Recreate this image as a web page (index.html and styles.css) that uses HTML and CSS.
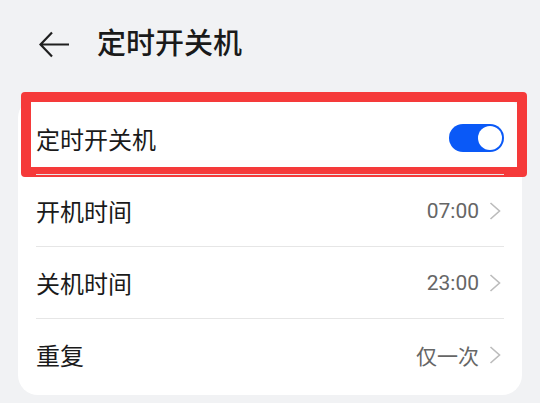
FILE: index.html
```html
<!DOCTYPE html>
<html lang="zh-CN">
<head>
    <meta charset="UTF-8">
    <meta name="viewport" content="width=device-width, initial-scale=1.0">
    <title>定时开关机</title>
    <link rel="stylesheet" href="styles.css">
</head>
<body>
    <header class="top-bar">
        <svg class="back-icon" width="30" height="27" viewBox="0 0 30 27">
            <path d="M30 13.5H2M13 1.5L1.5 13.5L13 25.5" fill="none" stroke="#1f1f1f" stroke-width="2.2"/>
        </svg>
        <h1 class="page-title">定时开关机</h1>
    </header>

    <div class="settings-card">
        <div class="setting-row highlighted">
            <span class="row-label">定时开关机</span>
            <div class="switch on"><div class="knob"></div></div>
            <div class="highlight-frame"></div>
        </div>
        <div class="setting-row">
            <span class="row-label">开机时间</span>
            <span class="row-value">07:00</span>
            <svg class="chevron" width="12" height="18" viewBox="0 0 12 18"><path d="M1.5 1L10.5 9L1.5 17" fill="none" stroke="#bcbcbc" stroke-width="1.6"/></svg>
        </div>
        <div class="setting-row">
            <span class="row-label">关机时间</span>
            <span class="row-value">23:00</span>
            <svg class="chevron" width="12" height="18" viewBox="0 0 12 18"><path d="M1.5 1L10.5 9L1.5 17" fill="none" stroke="#bcbcbc" stroke-width="1.6"/></svg>
        </div>
        <div class="setting-row">
            <span class="row-label">重复</span>
            <span class="row-value">仅一次</span>
            <svg class="chevron" width="12" height="18" viewBox="0 0 12 18"><path d="M1.5 1L10.5 9L1.5 17" fill="none" stroke="#bcbcbc" stroke-width="1.6"/></svg>
        </div>
    </div>
</body>
</html>
```

FILE: styles.css
```css
body {
    margin: 0;
    background-color: #f1f2f4;
    font-family: Roboto, "Noto Sans CJK SC", sans-serif;
    color: #1a1a1a;
}

.top-bar {
    display: flex;
    align-items: center;
    height: 88px;
    padding-left: 39px;
}

.back-icon {
    flex-shrink: 0;
}

.page-title {
    margin: 0 0 0 28px;
    font-size: 29px;
    font-weight: 500;
    line-height: 1;
}

.settings-card {
    margin: 10px 18px 0;
    padding: 4px 0 5px;
    background-color: white;
    border-radius: 20px;
}

.setting-row {
    position: relative;
    display: flex;
    align-items: center;
    height: 71px;
    margin: 0 18px;
    border-top: 1px solid #e6e6e6;
}

.setting-row:first-child {
    height: 72px;
    border-top: none;
}

.row-label {
    flex: 1;
    font-size: 24px;
}

.row-value {
    font-size: 21px;
    color: #666;
}

.chevron {
    margin: 0 3px 0 10px;
}

.switch {
    width: 55px;
    height: 28px;
    border-radius: 14px;
    background-color: #0a59f7;
    display: flex;
    align-items: center;
    justify-content: flex-end;
    padding: 0 2px;
    box-sizing: border-box;
}

.knob {
    width: 24px;
    height: 24px;
    border-radius: 50%;
    background-color: white;
}

/* cadre rouge autour de la premiere ligne */
.highlight-frame {
    position: absolute;
    top: -10px;
    bottom: -3px;
    left: -15px;
    right: -23px;
    border: 10px solid #f53a3a;
    border-radius: 4px;
}
```
